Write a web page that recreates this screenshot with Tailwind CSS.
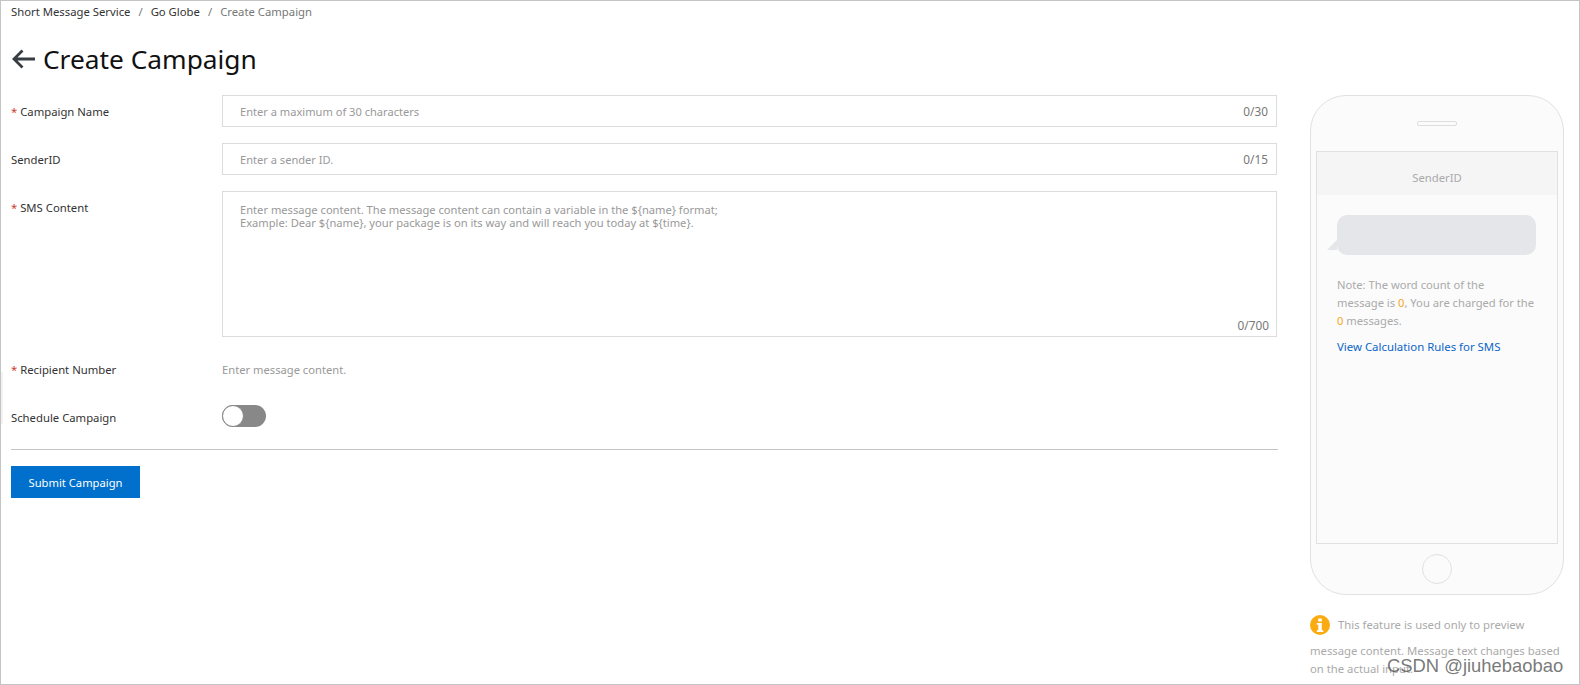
<!DOCTYPE html>
<html><head><meta charset="utf-8"><script src="https://cdn.jsdelivr.net/npm/@tailwindcss/browser@4"></script></head>
<body class="m-0 bg-white">
<div class="relative w-[1580px] h-[685px] overflow-hidden border border-[#c4c4c4] font-['Noto_Sans',sans-serif] text-[11.3px] text-[#333] flex flex-col pl-[10px]">
  <div class="absolute left-0 top-[371px] w-[2px] h-[52px] bg-[#f2f2f2]"></div>
  <div class="h-[22px] flex items-center text-[11.3px] leading-none">
    <span>Short Message Service</span><span class="mx-[8px] text-[#777]">/</span><span>Go Globe</span><span class="mx-[8px] text-[#777]">/</span><span class="text-[#777]">Create Campaign</span>
  </div>
  <div class="flex flex-1 min-h-0">
    <div class="w-[1267px] shrink-0">
      <div class="h-[72px] flex items-center gap-[8px]">
        <svg width="24" height="20" viewBox="0 0 24 20" fill="none" stroke="#373d41" stroke-width="2.800"><path d="M24 10H3M11.500 1.500 3 10l8.500 8.500"/></svg>
        <h1 class="text-[26.3px] leading-none text-[#111]">Create Campaign</h1>
      </div>
      <div class="flex flex-col gap-[16px]">
        <div class="flex h-[32px] items-center">
          <label class="w-[211px] shrink-0 pt-[3px]"><span class="text-[#c8402f]">*</span> Campaign Name</label>
          <div class="flex-1 mr-[1px] h-full border border-[#dcdcdc] flex items-center justify-between pl-[17px] pr-[8px] pt-[2px] text-[#999] text-[11.1px]"><span>Enter a maximum of 30 characters</span><span class="text-[#777] text-[11.8px]">0/30</span></div>
        </div>
        <div class="flex h-[32px] items-center">
          <label class="w-[211px] shrink-0 pt-[3px]">SenderID</label>
          <div class="flex-1 mr-[1px] h-full border border-[#dcdcdc] flex items-center justify-between pl-[17px] pr-[8px] pt-[2px] text-[#999] text-[11.1px]"><span>Enter a sender ID.</span><span class="text-[#777] text-[11.8px]">0/15</span></div>
        </div>
        <div class="flex h-[146px]">
          <label class="w-[211px] shrink-0 pt-[9px]"><span class="text-[#c8402f]">*</span> SMS Content</label>
          <div class="relative flex-1 mr-[1px] h-full border border-[#dcdcdc] pl-[17px] pt-[11px] text-[#999] text-[11.15px] leading-[13px]">
            <p>Enter message content. The message content can contain a variable in the ${name} format;</p>
            <p>Example: Dear ${name}, your package is on its way and will reach you today at ${time}.</p>
            <span class="absolute right-[7px] bottom-[3px] leading-[16px] text-[#777] text-[11.8px]">0/700</span>
          </div>
        </div>
        <div class="flex h-[32px] items-center">
          <label class="w-[211px] shrink-0 pt-[3px]"><span class="text-[#c8402f]">*</span> Recipient Number</label>
          <span class="text-[#999] pt-[3px] text-[11.2px]">Enter message content.</span>
        </div>
        <div class="flex h-[32px] items-center">
          <label class="w-[211px] shrink-0 pt-[3px]">Schedule Campaign</label>
          <div class="w-[44px] h-[22px] rounded-full bg-[#888] relative -mt-[2px]"><div class="absolute left-0 top-0 w-[22px] h-[22px] rounded-full bg-white border border-[#888]"></div></div>
        </div>
      </div>
      <div class="mt-[16px] border-t border-[#c4c4c4]"></div>
      <button class="mt-[16px] w-[129px] h-[32px] pt-[2px] bg-[#0070cc] text-white text-center text-[11.2px]">Submit Campaign</button>
    </div>
    <div class="ml-[32px] w-[253px] shrink-0">
      <div class="mt-[72px] w-[254px] h-[500px] rounded-[36px] border border-[#e1e1e1] bg-[#fbfbfb] flex flex-col items-center pt-[25px]">
        <div class="w-[40px] h-[5px] rounded-[2px] border border-[#dedede]"></div>
        <div class="mt-[25px] w-[242px] h-[393px] border border-[#e1e1e1] flex flex-col">
          <div class="h-[43px] bg-[#f5f5f5] flex items-center justify-center text-[#aaa] pt-[10px]">SenderID</div>
          <div class="pl-[20px] pr-[21px] pt-[20px]">
            <div class="relative h-[40px] rounded-[10px] bg-[#e5e6ea]">
              <div class="absolute left-[-10px] bottom-[5px] w-0 h-0 border-l-[10px] border-l-transparent border-b-[10px] border-b-[#e5e6ea]"></div>
            </div>
            <p class="mt-[21px] -mr-[8px] text-[#aaa] text-[11.2px] leading-[18px]">Note: The word count of the<br>message is <span class="text-[#f5a623]">0</span>, You are charged for the<br><span class="text-[#f5a623]">0</span> messages.</p>
            <p class="mt-[8px] text-[#0a66c8] text-[11.4px]">View Calculation Rules for SMS</p>
          </div>
        </div>
        <div class="mt-[10px] w-[30px] h-[30px] rounded-full border border-[#e1e1e1]"></div>
      </div>
      <div class="mt-[20px] text-[#aaa] leading-[18px]">
        <div class="flex items-center gap-[8px] h-[20px]">
          <svg width="20" height="20" viewBox="0 0 20 20"><circle cx="10" cy="10" r="10" fill="#fbab12"/><rect x="8.200" y="3.500" width="3.600" height="3" fill="#fff"/><path d="M6.800 8h5v7.200h1.500V17H6.800v-1.800h1.500V9.800H6.800z" fill="#fff"/></svg>
          <span>This feature is used only to preview</span>
        </div>
        <p class="mt-[7px]">message content. Message text changes based on the actual input.</p>
      </div>
    </div>
  </div>
  <div class="absolute left-[1386px] top-[656px] text-[18.4px] leading-none text-[#555]/80 font-['Liberation_Sans',sans-serif]">CSDN @jiuhebaobao</div>
</div>
</body></html>
